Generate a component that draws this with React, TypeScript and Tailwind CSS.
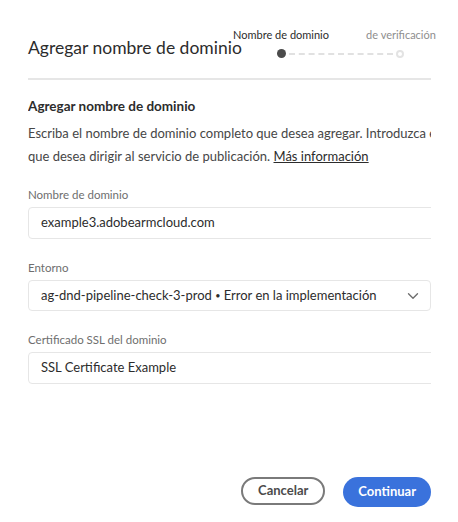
import { ChevronDown } from "lucide-react"

const font = { fontFamily: "Lato, 'Liberation Sans', sans-serif" }

const Label = ({ children }: { children: string }) => (
  <span className="text-[11.5px] leading-[15px] text-[#6e6e6e] mb-[5px] whitespace-nowrap">{children}</span>
)

const Field = ({ label, value }: { label: string; value: string }) => (
  <div className="flex flex-col">
    <Label>{label}</Label>
    <div className="w-[440px] h-[32px] flex items-center px-[12px] border border-[#e6e6e6] rounded-[4px] bg-white text-[13px] text-[#2c2c2c] whitespace-nowrap">
      {value}
    </div>
  </div>
)

const Stepper = () => (
  <div className="flex flex-col w-[180px]">
    <div className="flex text-[11px] leading-[13px] mt-[28px]">
      <span className="w-[100px] text-center text-[#2c2c2c] whitespace-nowrap">Nombre de dominio</span>
      <span className="w-[80px] ml-[30px] -mr-[30px] text-center text-[#8e8e8e] whitespace-nowrap">de verificación</span>
    </div>
    <div className="flex items-center mt-[8px] ml-[46px]">
      <span className="w-[9px] h-[9px] rounded-full bg-[#4b4b4b] shrink-0" />
      <span className="w-[104px] border-t-[2px] border-dashed border-[#e1e1e1] mx-[3px]" />
      <span className="w-[8px] h-[8px] rounded-full border-[2px] border-[#e3e3e3] shrink-0" />
    </div>
  </div>
)

export default function App() {
  return (
    <div style={font} className="w-[458px] h-[522px] bg-white flex flex-col overflow-hidden">
      <div className="relative flex items-start h-[78px] pl-[28px]">
        <h1 className="text-[17.5px] leading-[22px] text-[#2c2c2c] mt-[37px] whitespace-nowrap">
          Agregar nombre de dominio
        </h1>
        <div className="absolute left-[231px] top-0">
          <Stepper />
        </div>
      </div>
      <div className="w-[403px] ml-[28px] h-[2px] bg-[#e6e6e6]" />

      <div className="w-[403px] ml-[28px] overflow-hidden flex flex-col flex-1">
        <h2 className="text-[13.5px] font-bold leading-[18px] text-[#2c2c2c] mt-[17px] whitespace-nowrap">
          Agregar nombre de dominio
        </h2>
        <p className="text-[13px] leading-[23px] text-[#464646] mt-[7px] whitespace-nowrap">
          Escriba el nombre de dominio completo que desea agregar. Introduzca el nombre de dominio
          <br />
          que desea dirigir al servicio de publicación.{" "}
          <span className="underline text-[#2c2c2c]">Más información</span>
        </p>

        <div className="flex flex-col gap-[21px] mt-[19px]">
          <Field label="Nombre de dominio" value="example3.adobearmcloud.com" />
          <div className="flex flex-col">
            <Label>Entorno</Label>
            <div className="h-[31px] flex items-center justify-between pl-[12px] pr-[8px] border border-[#e6e6e6] rounded-[4px] bg-white text-[13px] text-[#2c2c2c] whitespace-nowrap">
              <span>
                ag-dnd-pipeline-check-3-prod <span className="text-[9px] align-[1px]">•</span> Error en la implementación
              </span>
              <ChevronDown size={18} strokeWidth={1.8} className="text-[#6e6e6e] shrink-0" />
            </div>
          </div>
          <Field label="Certificado SSL del dominio" value="SSL Certificate Example" />
        </div>

        <div className="flex justify-end gap-[18px] mt-auto mb-[15px]">
          <button className="h-[28px] px-[15px] rounded-full border-[2px] border-[#7a7a7a] text-[13px] font-bold text-[#4b4b4b] bg-white">
            Cancelar
          </button>
          <button className="h-[30px] px-[15px] rounded-full bg-[#3a72dc] text-[13px] font-bold text-white">
            Continuar
          </button>
        </div>
      </div>
    </div>
  )
}
